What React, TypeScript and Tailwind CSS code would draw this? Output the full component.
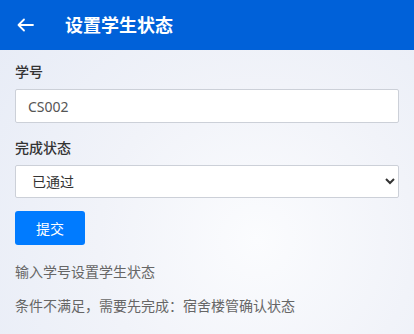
import React, { useState } from 'react';

export default function App() {
  const [studentId, setStudentId] = useState('CS002');
  const [status, setStatus] = useState('passed');

  return (
    <div
      className="min-h-[334px] bg-[radial-gradient(circle_at_62%_72%,#fbfcfe_0%,#f1f3f9_45%,#e6ebf6_100%)]"
      style={{ fontFamily: '"Noto Sans", "Noto Sans CJK SC", sans-serif' }}
    >
      {/* Header */}
      <div className="h-[50px] bg-[#0061d9] flex items-center px-[17px]">
        <button className="text-white">
          <svg width="17" height="14" viewBox="0 0 17 14" fill="none" stroke="currentColor" strokeWidth="1.8" strokeLinecap="round" strokeLinejoin="round">
            <path d="M16 7H1.5M7 1.5L1.5 7L7 12.5" />
          </svg>
        </button>
        <h1 className="ml-[31px] text-white text-[18px] font-bold leading-none">设置学生状态</h1>
      </div>

      {/* Form */}
      <div className="px-[15px] pt-[10px]">
        <label className="block text-[14px] font-medium text-[#333] leading-[24px]">学号</label>
        <input
          value={studentId}
          onChange={(e) => setStudentId(e.target.value)}
          className="mt-[5px] w-full h-[34px] px-[12px] bg-white border border-[#ccd0d8] rounded-[2px] text-[14px] text-[#555] outline-none"
        />

        <label className="block mt-[13px] text-[14px] font-medium text-[#333] leading-[24px]">完成状态</label>
        <select
          value={status}
          onChange={(e) => setStatus(e.target.value)}
          className="mt-[5px] w-full h-[33px] pl-[12px] pr-[8px] bg-white border border-[#ccd0d8] rounded-[2px] text-[14px] text-[#333] outline-none"
        >
          <option value="passed">已通过</option>
          <option value="pending">未通过</option>
        </select>

        <button className="mt-[13px] w-[70px] h-[34px] bg-[#007bff] text-white text-[14px] rounded-[3px]">
          提交
        </button>

        <p className="mt-[17px] text-[14px] text-[#666] leading-[20px]">输入学号设置学生状态</p>
        <p className="mt-[14px] text-[14px] text-[#666] leading-[20px]">条件不满足，需要先完成：宿舍楼管确认状态</p>
      </div>
    </div>
  );
}
